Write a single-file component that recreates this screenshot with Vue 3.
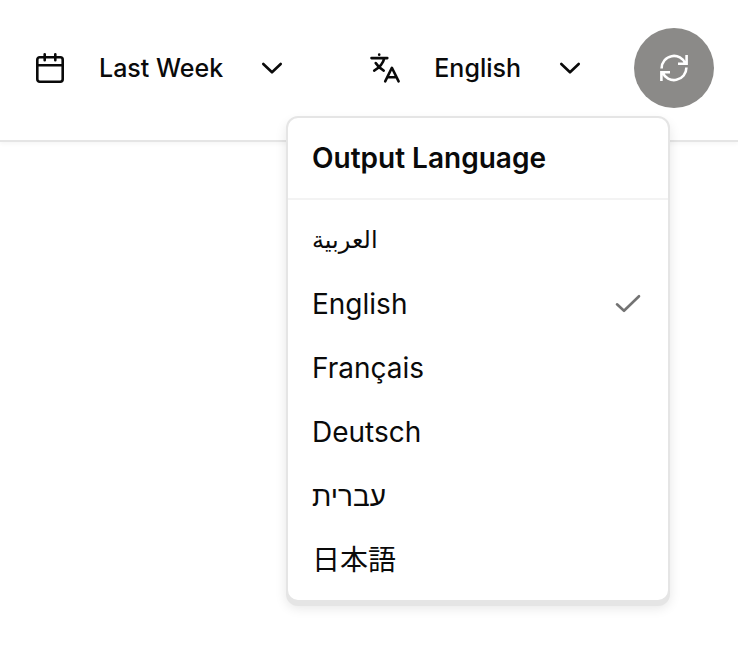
<script setup>
import { ref } from 'vue'

const languages = [
  { code: 'ar', name: 'العربية', dir: 'rtl' },
  { code: 'en', name: 'English', dir: 'ltr' },
  { code: 'fr', name: 'Français', dir: 'ltr' },
  { code: 'de', name: 'Deutsch', dir: 'ltr' },
  { code: 'he', name: 'עברית', dir: 'rtl' },
  { code: 'ja', name: '日本語', dir: 'ltr' },
]
const selected = ref(languages[1])
const open = ref(true)
</script>

<template>
  <div class="page">
    <header class="toolbar">
      <button class="trigger" type="button" aria-haspopup="menu">
        <svg class="icon" viewBox="0 0 32 32" aria-hidden="true">
          <rect x="3.3" y="5.3" width="25.4" height="24.4" rx="2.4" />
          <path d="M3.3 13.3h25.4M10.7 2.3v6M21.3 2.3v6" />
        </svg>
        <span class="label">Last Week</span>
        <svg class="icon" viewBox="0 0 32 32" aria-hidden="true">
          <path d="M7.3 12l8.7 8.3L24.7 12" />
        </svg>
      </button>

      <div class="actions">
        <div class="language">
          <button
            class="trigger"
            type="button"
            aria-haspopup="menu"
            :aria-expanded="open"
            @click="open = !open"
          >
            <svg class="icon" viewBox="0 0 32 32" aria-hidden="true">
              <path d="M2.5 6.1h15.8M10.200 2.500v.2M15.200 6.500C14.200 11 10.500 15.500 5.200 18.600M6.700 11C8.500 14 11.300 16.700 14.700 18.700" />
              <path d="M16.200 29.400L22.900 15.800L29.600 29.400M18.500 25.300h8.800" />
            </svg>
            <span class="label">{{ selected.name }}</span>
            <svg class="icon" viewBox="0 0 32 32" aria-hidden="true">
              <path d="M7.3 12l8.7 8.3L24.7 12" />
            </svg>
          </button>

          <section v-if="open" class="menu" aria-labelledby="menu-title">
            <h2 id="menu-title" class="menu-title">Output Language</h2>
            <div class="options" role="menu" aria-labelledby="menu-title">
              <button
                v-for="language in languages"
                :key="language.code"
                class="option"
                type="button"
                role="menuitemradio"
                :aria-checked="language.code === selected.code"
                @click="selected = language"
              >
                <span :lang="language.code" :dir="language.dir">{{ language.name }}</span>
                <svg
                  v-if="language.code === selected.code"
                  class="check"
                  viewBox="0 0 32 32"
                  aria-hidden="true"
                >
                  <path d="M5 16.300l7 6.500L27 8.200" />
                </svg>
              </button>
            </div>
          </section>
        </div>

        <button class="refresh" type="button" aria-label="Refresh">
          <svg class="icon" viewBox="0 0 32 32" aria-hidden="true">
            <path d="M3.600 16.500A12.400 12.400 0 0 1 27.500 11.700M28.600 3v8.700H20" />
            <path d="M28.400 15.500A12.400 12.400 0 0 1 4.500 20.300M3.400 29v-8.700H12" />
          </svg>
        </button>
      </div>
    </header>
  </div>
</template>

<style>
body {
  margin: 0;
  background: #fff;
}
</style>

<style scoped>
.page {
  min-height: 100vh;
  color: #0a0a0a;
  font-family: Inter, "Liberation Sans", "DejaVu Sans", "Noto Sans CJK JP", sans-serif;
}

button {
  margin: 0;
  padding: 0;
  border: 0;
  background: none;
  color: inherit;
  font: inherit;
  cursor: pointer;
}

.toolbar {
  display: flex;
  align-items: center;
  justify-content: space-between;
  padding: 28px 24px 32px 34px;
  border-bottom: 2px solid #e5e5e5;
  box-shadow: 0 2px 4px rgba(0, 0, 0, 0.04);
}

.actions {
  display: flex;
  align-items: center;
  gap: 48px;
}

.trigger {
  display: flex;
  align-items: center;
  gap: 33px;
  height: 80px;
}

.label {
  font-size: 25px;
  font-weight: 500;
  line-height: 32px;
  white-space: nowrap;
}

.icon,
.check {
  flex: none;
  width: 32px;
  height: 32px;
  fill: none;
  stroke: currentColor;
  stroke-width: 2.6;
  stroke-linecap: round;
  stroke-linejoin: round;
}

.language {
  position: relative;
}

.refresh {
  display: grid;
  place-items: center;
  width: 80px;
  height: 80px;
  border-radius: 50%;
  background: #8b8a88;
  color: #fff;
}

.refresh .icon {
  stroke-linecap: butt;
  stroke-linejoin: miter;
}

.menu {
  position: absolute;
  top: 88px;
  right: -84px;
  box-sizing: border-box;
  width: 384px;
  border: 2px solid #e5e5e5;
  border-radius: 12px;
  background: #fff;
  box-shadow: 0 4px 0 #e5e5e5, 0 6px 12px rgba(0, 0, 0, 0.1);
}

.menu-title {
  margin: 0;
  padding: 20px 24px;
  border-bottom: 2px solid #f3f3f3;
  font-size: 28px;
  font-weight: 600;
  line-height: 40px;
  white-space: nowrap;
}

.options {
  display: flex;
  flex-direction: column;
  padding: 8px 0;
}

.option {
  display: flex;
  align-items: center;
  justify-content: space-between;
  height: 64px;
  padding: 0 24px;
  font-size: 28px;
  line-height: 40px;
}

.option :lang(ar) {
  font-size: 24px;
  font-weight: 500;
}

.option :lang(he) {
  font-weight: 500;
}

.check {
  color: #737373;
}
</style>
